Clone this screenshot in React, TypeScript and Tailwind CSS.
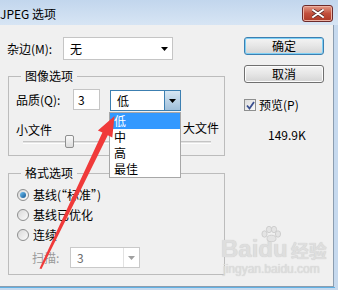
import React from "react";

const font = { fontFamily: '"Noto Sans CJK SC", "Liberation Sans", sans-serif' };
const latin = { fontFamily: '"Liberation Sans", sans-serif' };

function Caret({ color = "#000" }: { color?: string }) {
  return (
    <svg width="7" height="4" viewBox="0 0 7 4">
      <path d="M0 0h7L3.5 4z" fill={color} />
    </svg>
  );
}

function Select({
  value,
  className,
  focused,
  disabled,
}: {
  value: string;
  className: string;
  focused?: boolean;
  disabled?: boolean;
}) {
  return (
    <div
      className={`flex border bg-white ${
        focused ? "border-[#3c7fb1]" : disabled ? "border-[#c9c9c9]" : "border-[#c5c5c5]"
      } ${className}`}
    >
      <span
        className={`flex flex-1 items-center pl-[6px] text-[12px] ${
          disabled ? "text-[#6d6d6d]" : "text-black"
        }`}
      >
        {value}
      </span>
      {focused ? (
        <span className="flex w-[16px] items-center justify-center border-l border-[#3c7fb1] bg-gradient-to-b from-[#d6e6f3] to-[#9fbfda]">
          <Caret />
        </span>
      ) : (
        <span
          className={`flex w-[16px] items-center justify-center ${
            disabled ? "border-l border-[#e2e2e2]" : ""
          }`}
        >
          <Caret color={disabled ? "#a0a0a0" : "#000"} />
        </span>
      )}
    </div>
  );
}

function Button({ label, primary }: { label: string; primary?: boolean }) {
  return (
    <div
      className={`flex h-[18px] w-[80px] items-center justify-center rounded-[3px] border bg-gradient-to-b from-[#f4f4f4] via-[#e6e6e6] to-[#d4d4d4] text-[12px] text-black ${
        primary
          ? "border-[#3c7fb1] shadow-[inset_0_0_0_1px_#7fd0f5]"
          : "border-[#707070] shadow-[inset_0_0_0_1px_#fcfcfc]"
      }`}
    >
      {label}
    </div>
  );
}

function Radio({ checked, label }: { checked?: boolean; label: string }) {
  return (
    <div className="flex h-[16px] items-center pl-[8px]">
      <span className="flex h-[12px] w-[12px] items-center justify-center rounded-full border border-[#8e8f8f] bg-gradient-to-br from-[#d9d9d9] to-[#fbfbfb]">
        {checked && (
          <span className="h-[6px] w-[6px] rounded-full bg-gradient-to-br from-[#6ec3f5] to-[#145893]" />
        )}
      </span>
      <span className="ml-[4px] text-[12px] text-black">{label}</span>
    </div>
  );
}

export default function App() {
  return (
    <div
      className="relative h-[290px] w-[338px] overflow-hidden bg-[#c6d9ee]"
      style={font}
    >
      {/* title bar */}
      <div className="flex h-[25px] items-start justify-between bg-gradient-to-b from-[#c2d6ed] to-[#d7e5f4] pr-[5px] pt-[5px]">
        <span className="text-[12px] leading-[17px] text-black">JPEG 选项</span>
        <div className="flex h-[17px] w-[31px] items-center justify-center rounded-[3px] border border-[#6d2b2b] bg-gradient-to-b from-[#e39a88] via-[#c24f3c] to-[#ad3826] shadow-[inset_0_0_0_1px_#eeb3a4]">
          <svg width="12" height="9" viewBox="0 0 12 9">
            <path
              d="M1 1 L11 8 M11 1 L1 8"
              stroke="#5a2a2a"
              strokeWidth="3.4"
              strokeLinecap="round"
            />
            <path
              d="M1 1 L11 8 M11 1 L1 8"
              stroke="#fff"
              strokeWidth="2"
              strokeLinecap="round"
            />
          </svg>
        </div>
      </div>

      {/* client area */}
      <div className="flex h-[262px] w-[334px] border-r border-b border-[#8b9db0] bg-[#f0f0f0] pl-[7px] pt-[12px]">
        {/* left column */}
        <div className="flex w-[218px] flex-col">
          <div className="flex h-[23px] items-center">
            <span className="w-[56px] text-[12px] text-black">杂边(M):</span>
            <Select value="无" className="h-[23px] w-[110px]" />
          </div>

          <fieldset className="ml-[1px] mt-[8px] h-[88px] w-[217px] border border-[#bcbcbc] p-0">
            <legend className="ml-[12px] px-[4px] text-[12px] leading-[16px] text-black">
              图像选项
            </legend>
            <div className="mt-[5px] flex items-start pl-[7px]">
              <span className="w-[57px] text-[12px] leading-[21px] text-black">
                品质(Q):
              </span>
              <div className="flex h-[21px] w-[27px] items-center border border-[#c5c5c5] bg-white pl-[4px] text-[12px] text-black">
                3
              </div>
              <div className="relative ml-[10px] mt-[1px]">
                <Select value="低" focused className="h-[21px] w-[71px]" />
                <div className="absolute left-[-1px] top-[22px] z-10 flex w-[72px] flex-col border border-[#a7a7a7] bg-white text-[12px] leading-[16px] text-black">
                  <span className="bg-[#3399ff] pl-[4px] text-white">低</span>
                  <span className="pl-[4px]">中</span>
                  <span className="pl-[4px]">高</span>
                  <span className="pl-[4px]">最佳</span>
                </div>
              </div>
            </div>
            <div className="mt-[11px] flex justify-between pl-[7px] pr-[5px] text-[12px] leading-[16px] text-black">
              <span>小文件</span>
              <span className="-mt-[2px]">大文件</span>
            </div>
            <div className="relative ml-[14px] mt-[3px] h-[3px] w-[188px] border-t border-[#c4c4c4] border-b border-b-[#fdfdfd] bg-[#e3e3e3]">
              <div className="absolute left-[42px] top-[-7px] h-[13px] w-[9px] rounded-[2px] border border-[#8e8f8f] bg-gradient-to-b from-[#fafafa] to-[#dcdcdc]" />
            </div>
          </fieldset>

          <fieldset className="ml-[1px] mt-[9px] h-[110px] w-[217px] border border-[#bcbcbc] p-0">
            <legend className="ml-[12px] px-[4px] text-[12px] leading-[16px] text-black">
              格式选项
            </legend>
            <div className="mt-[6px] flex flex-col gap-[4px]">
              <Radio checked label={"基线(\u201c标准\u201d)"} />
              <Radio label="基线已优化" />
              <Radio label="连续" />
            </div>
            <div className="mt-[4px] flex items-center pl-[23px]">
              <span className="w-[38px] text-[12px] text-[#9a9a9a]">扫描:</span>
              <Select value="3" disabled className="h-[21px] w-[70px]" />
            </div>
          </fieldset>
        </div>

        {/* right column */}
        <div className="ml-[19px] flex w-[80px] flex-col">
          <Button label="确定" primary />
          <div className="mt-[10px]">
            <Button label="取消" />
          </div>
          <div className="mt-[15px] flex h-[14px] items-center">
            <span className="flex h-[12px] w-[12px] items-center justify-center border border-[#8e8f8f] bg-gradient-to-br from-[#dcdcdc] to-[#fafafa]">
              <svg width="9" height="9" viewBox="0 0 9 9">
                <path
                  d="M1 4.5 L3.5 7.5 L8 1"
                  stroke="#3a4f8f"
                  strokeWidth="1.8"
                  fill="none"
                />
              </svg>
            </span>
            <span className="ml-[3px] text-[12px] text-black">预览(P)</span>
          </div>
          <span className="mt-[15px] pl-[24px] text-[12px] leading-[16px] text-black">
            149.9K
          </span>
        </div>
      </div>

      {/* bottom frame line */}
      <div className="h-[1px] w-[335px] bg-[#5fb0e3]" />

      {/* watermark */}
      <div className="pointer-events-none absolute left-[221px] top-[234px] flex flex-col items-start gap-[1px] text-[#dedede]">
        <div className="flex h-[28px] items-end">
          <span
            className="text-[24px] font-bold leading-[27px] [text-shadow:0_0_1px_#c4c4c4]"
            style={latin}
          >
            Bai
          </span>
          <span className="relative">
            <svg
              className="absolute bottom-[20px] left-[3px]"
              width="20"
              height="16"
              viewBox="0 0 20 16"
            >
              <g fill="#e4e4e4" stroke="#c8c8c8" strokeWidth="0.8">
                <ellipse cx="3.5" cy="8" rx="2.6" ry="3.2" />
                <ellipse cx="8" cy="3.5" rx="2.6" ry="3.2" />
                <ellipse cx="13" cy="3.5" rx="2.6" ry="3.2" />
                <ellipse cx="17" cy="8" rx="2.6" ry="3.2" />
                <ellipse cx="10.5" cy="12.5" rx="4.5" ry="3.3" />
              </g>
            </svg>
            <span
              className="text-[24px] font-bold leading-[27px] [text-shadow:0_0_1px_#c4c4c4]"
              style={latin}
            >
              du
            </span>
          </span>
          <span className="ml-[3px] text-[18px] font-bold leading-[24px] [text-shadow:0_0_1px_#c4c4c4]">
            经验
          </span>
        </div>
        <span
          className="ml-[2px] text-[12px] leading-[13px] [text-shadow:0_0_1px_#c4c4c4]"
          style={latin}
        >
          jingyan.baidu.com
        </span>
      </div>

      {/* red annotation arrow */}
      <svg
        className="pointer-events-none absolute left-0 top-0 z-20"
        width="338"
        height="290"
        viewBox="0 0 338 290"
      >
        <polygon
          points="39.5,268.5 41.5,269 107.8,135.2 112.3,137.4 114.5,116 97.9,130.4 102.4,132.6"
          fill="#f03a3a"
        />
      </svg>
    </div>
  );
}
